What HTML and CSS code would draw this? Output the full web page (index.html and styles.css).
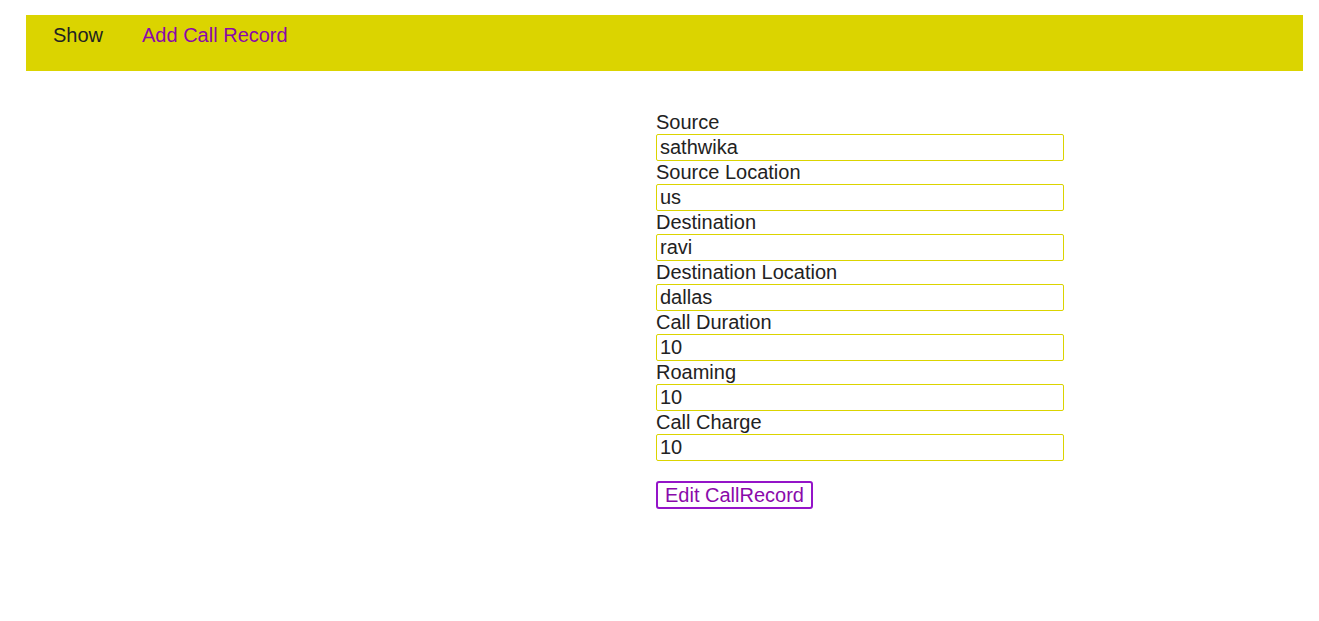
FILE: index.html
```html
<!DOCTYPE html>
<html>
<head>
<meta charset="utf-8">
<link rel="stylesheet" href="styles.css">
</head>
<body>
<div class="page">
  <nav class="topbar">
    <a class="nav-link current" href="#">Show</a>
    <a class="nav-link" href="#">Add Call Record</a>
  </nav>
  <main class="content">
    <form class="record-form">
      <label class="field-label">Source</label>
      <input class="field-input" type="text" value="sathwika">
      <label class="field-label">Source Location</label>
      <input class="field-input" type="text" value="us">
      <label class="field-label">Destination</label>
      <input class="field-input" type="text" value="ravi">
      <label class="field-label">Destination Location</label>
      <input class="field-input" type="text" value="dallas">
      <label class="field-label">Call Duration</label>
      <input class="field-input" type="text" value="10">
      <label class="field-label">Roaming</label>
      <input class="field-input" type="text" value="10">
      <label class="field-label">Call Charge</label>
      <input class="field-input" type="text" value="10">
      <button class="submit-btn" type="button">Edit CallRecord</button>
    </form>
  </main>
</div>
</body>
</html>
```
FILE: styles.css
```css
html, body {
  margin: 0;
  padding: 0;
  background: #fff;
}
body {
  font-family: "Liberation Sans", Arial, sans-serif;
  font-size: 20px;
  color: #222;
}
.page {
  padding: 15px 16px 0 26px;
}
.topbar {
  background: #dbd400;
  height: 56px;
  display: flex;
  align-items: flex-start;
  gap: 39px;
  padding: 0 0 0 27px;
  box-sizing: border-box;
}
.nav-link {
  text-decoration: none;
  font-size: 20px;
  line-height: 23px;
  margin-top: 9px;
  color: #8a0aaa;
}
.nav-link.current {
  color: #222;
}
.content {
  padding: 40px 0 0 630px;
}
.record-form {
  display: flex;
  flex-direction: column;
  align-items: flex-start;
  width: 408px;
}
.field-label {
  font-size: 20px;
  line-height: 23px;
  color: #222;
}
.field-input {
  -webkit-appearance: none;
  appearance: none;
  width: 408px;
  height: 27px;
  box-sizing: border-box;
  border: 1px solid #dbd400;
  border-radius: 2px;
  padding: 0 3px;
  margin: 0;
  font-family: "Liberation Sans", Arial, sans-serif;
  font-size: 20px;
  color: #222;
  background: #fff;
  outline: none;
  box-shadow: none;
}
.submit-btn {
  margin-top: 20px;
  height: 28px;
  padding: 0 7px;
  border: 2px solid #9414c8;
  border-radius: 3px;
  background: #fff;
  color: #8a0aaa;
  font-family: "Liberation Sans", Arial, sans-serif;
  font-size: 20px;
  line-height: 22px;
}
```
